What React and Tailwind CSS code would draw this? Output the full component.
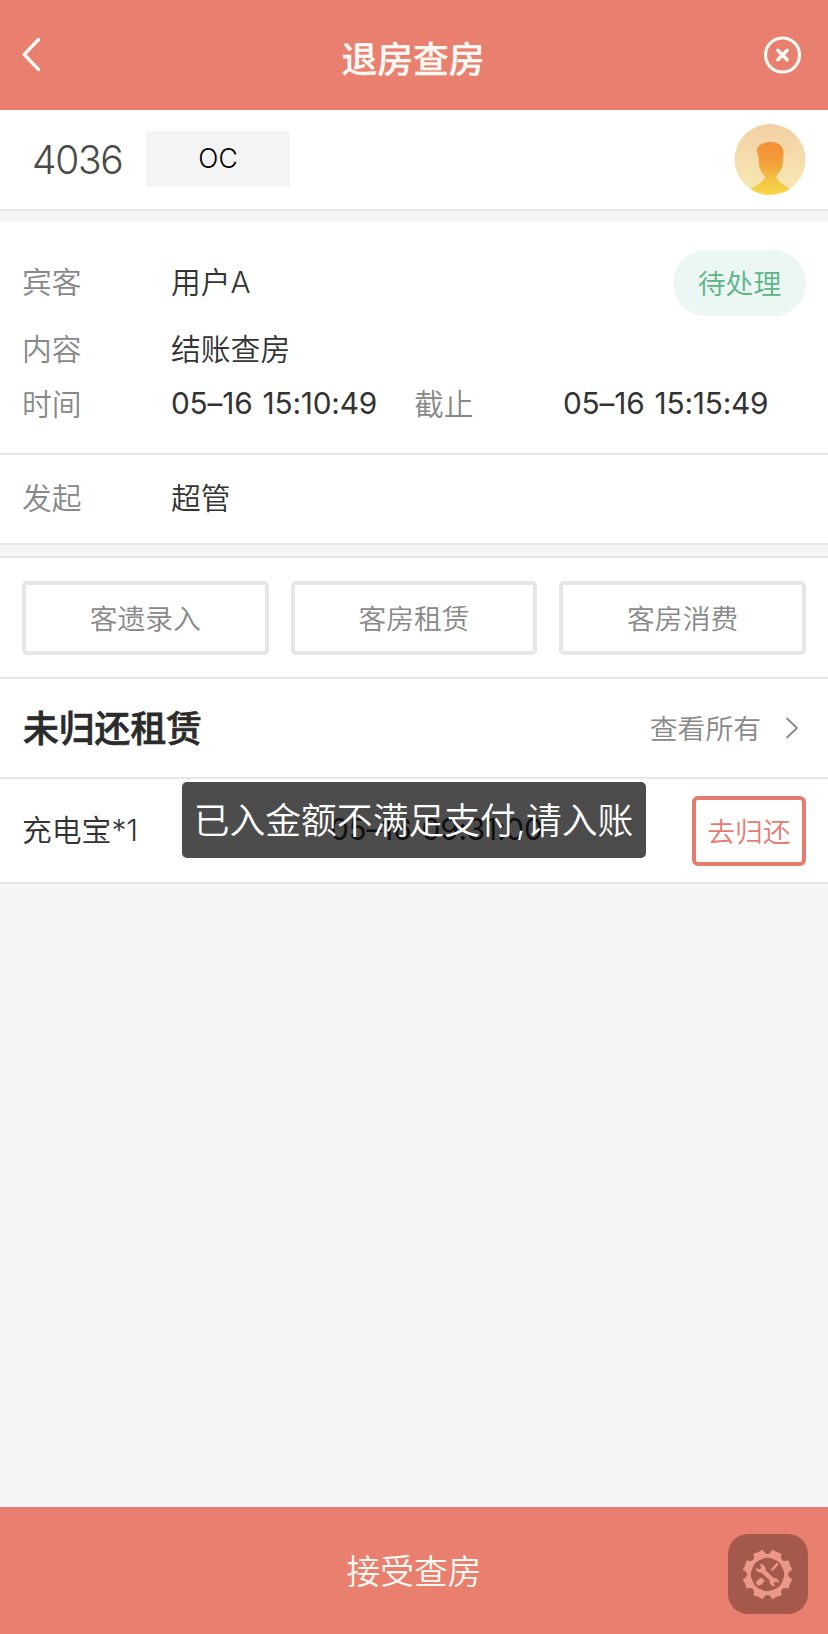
import React from 'react';

const actions = ['客遗录入', '客房租赁', '客房消费'];

// gear outline: 8 teeth around the ring
const gearTeeth = [0, 45, 90, 135, 180, 225, 270, 315];

function BackIcon() {
    return (
        <svg className="w-5 h-9" viewBox="0 0 20 36" fill="none" stroke="#fff9f3" strokeWidth="3.4" strokeLinecap="round" strokeLinejoin="round">
            <path d="M16.5 2.5 L2.2 17.5 L16.5 32.5" />
        </svg>
    );
}

function CloseIcon() {
    return (
        <svg className="w-[38px] h-[38px]" viewBox="0 0 38 38" fill="none" stroke="#fff9f3" strokeLinecap="round">
            <circle cx="18.5" cy="19" r="17" strokeWidth="3.2" />
            <path d="M13.8 14.3 L23.2 23.7 M23.2 14.3 L13.8 23.7" strokeWidth="3.6" />
        </svg>
    );
}

function Avatar() {
    return (
        <svg className="w-[72px] h-[72px]" viewBox="0 0 72 72">
            <defs>
                <linearGradient id="avatarBg" x1="0" y1="0" x2="0" y2="1">
                    <stop offset="0" stopColor="#f3cfa4" />
                    <stop offset="1" stopColor="#f7ebb4" />
                </linearGradient>
                <linearGradient id="avatarMan" x1="0" y1="0" x2="0" y2="1">
                    <stop offset="0" stopColor="#f28f35" />
                    <stop offset="0.35" stopColor="#f39d3b" />
                    <stop offset="0.7" stopColor="#f5c345" />
                    <stop offset="1" stopColor="#f8dc45" />
                </linearGradient>
                <clipPath id="avatarClip">
                    <circle cx="36" cy="35.5" r="35.5" />
                </clipPath>
            </defs>
            <g clipPath="url(#avatarClip)">
                <rect width="72" height="72" fill="url(#avatarBg)" />
                <path
                    fill="url(#avatarMan)"
                    d="M23 25 C25 20 30 18 37 18 C45 18 49.5 22 49.5 29 L48.6 41 C48 46 44.5 49 42.5 52 L42.5 54 C44 57.5 50 61 56 64.5 L56 73 L15 73 L15 65.5 C23 61.5 28.5 58 31.5 53 C28 49 25.5 46 25 41 L24.3 31 C23 29.5 22.6 27.5 23 25 Z"
                />
            </g>
        </svg>
    );
}

function ToolsIcon() {
    return (
        <svg className="w-[51px] h-[51px]" viewBox="0 0 50 50">
            <g fill="#ec9787">
                {gearTeeth.map((deg) => (
                    <path key={deg} transform={`rotate(${deg + 22.5} 25 25)`} d="M17 7 C19 5.500 20 3.500 20 0.800 Q25 1.600 30 0.800 C30 3.500 31 5.500 33 7 L33 9 L17 9 Z" />
                ))}
            </g>
            <circle cx="25" cy="25" r="18.3" fill="none" stroke="#ec9787" strokeWidth="3.8" />
            <g fill="#ec9787">
                {/* wrench */}
                <path d="M13.5 18.5 L17 20 L19 18.3 L17.5 14.8 C21 14.5 23.5 17 23 20.5 L31 28.5 C34 28 36.5 30 36.5 33.5 L33.5 31.5 L31 33.5 L32.5 36.5 C29 36.5 26.5 34 27.3 31 L19 23.3 C16 23.5 13.5 21.5 13.5 18.5 Z" />
                {/* screwdriver */}
                <path d="M28 20.5 L34 13.5 L36 15 L30 21.5 Z" />
                <path d="M14 32 L18.5 28 L22.5 31 L19 35 C17 36.5 12.8 35.5 14 32 Z" />
            </g>
        </svg>
    );
}

function Label({ children }) {
    return <span className="w-[149px] shrink-0 text-[#888]">{children}</span>;
}

function Time({ children }) {
    return <span className="whitespace-nowrap font-normal tracking-[-0.2px] [word-spacing:2px] pb-0.5">{children}</span>;
}

export default function App() {
    return (
        <div className="relative w-full h-[1634px] flex flex-col bg-[#f5f5f5] text-[#333] text-[29.8px] font-[350] leading-none font-['Inter','Noto_Sans_CJK_SC',sans-serif]">
            <header className="h-[110px] shrink-0 bg-[#e97f6f] flex items-center justify-between pl-[22px] pr-[26px]">
                <div className="w-10"><BackIcon /></div>
                <h1 className="text-[35.8px] font-medium text-[#fff9f3] pt-[11px] [-webkit-text-stroke:0.3px_#fff9f3]">退房查房</h1>
                <CloseIcon />
            </header>

            <section className="h-[101px] shrink-0 bg-white border-b-2 border-[#e6e6e6] flex items-center pl-[32px] pr-[22px]">
                <span className="w-[114px] text-[39px] tracking-[-1.3px] text-[#4a4a4a]">4036</span>
                <span className="w-36 h-[56px] -mt-0.5 bg-[#f4f4f4] text-[26.5px] text-black flex items-center justify-center pb-px">OC</span>
                <div className="ml-auto"><Avatar /></div>
            </section>

            <section className="mt-[11px] h-[233px] shrink-0 bg-white border-b-2 border-[#e6e6e6] pt-7 px-[22px]">
                <div className="h-[66px] mb-1.5 flex items-center">
                    <Label>宾客</Label>
                    <span>用户A</span>
                    <span className="ml-auto w-[133px] h-[66px] rounded-full bg-[#ecf7f3] text-[#5bb586] text-[27.8px] flex items-center justify-center pt-[3px]">待处理</span>
                </div>
                <div className="h-[55px] flex items-center">
                    <Label>内容</Label>
                    <span>结账查房</span>
                </div>
                <div className="h-[55px] flex items-center">
                    <Label>时间</Label>
                    <div className="w-[243px] flex"><Time>05–16 15:10:49</Time></div>
                    <Label>截止</Label>
                    <Time>05–16 15:15:49</Time>
                </div>
            </section>

            <section className="h-[90px] shrink-0 bg-white border-b-2 border-[#e6e6e6] px-[22px] flex items-center">
                <Label>发起</Label>
                <span>超管</span>
            </section>

            <section className="mt-[11px] h-[123px] shrink-0 bg-white border-y-2 border-[#e6e6e6] px-[22px] pt-[23px] grid grid-cols-3 gap-[22px]">
                {actions.map((name) => (
                    <button key={name} className="h-[74px] border-4 border-[#e6e6e6] rounded-[5px] text-[27.8px] text-[#888] pt-[3px]">
                        {name}
                    </button>
                ))}
            </section>

            <section className="h-[100px] shrink-0 bg-white border-b-2 border-[#e6e6e6] pl-[23px] pr-[29px] flex items-center justify-between">
                <h2 className="text-[35.8px] font-medium text-[#2b2b2b] pt-1 [-webkit-text-stroke:0.7px_#2b2b2b]">未归还租赁</h2>
                <div className="flex items-center gap-[24px] text-[27.8px] text-[#888]">
                    <span className="pt-[3px]">查看所有</span>
                    <svg className="w-[14px] h-[22px]" viewBox="0 0 14 22" fill="none" stroke="#888" strokeWidth="1.8">
                        <path d="M1.5 1 L12 11 L1.5 21" />
                    </svg>
                </div>
            </section>

            <section className="h-[105px] shrink-0 bg-white border-b-2 border-[#e6e6e6] pl-[22px] pr-[22px] flex items-center">
                <span className="w-[308px] pt-px">充电宝*1</span>
                <Time>05–16 09:31:00</Time>
                <button className="ml-auto w-[114px] h-[70px] border-4 border-[#e67c70] rounded-md text-[27.8px] text-[#e67c70] whitespace-nowrap pt-1">去归还</button>
            </section>

            {/* Toast */}
            <div className="absolute top-[782px] left-1/2 -translate-x-1/2 w-[464px] h-[76px] rounded-[5px] bg-black/70 text-white text-[35.8px] flex items-center justify-center whitespace-nowrap pt-1 pr-px">
                已入金额不满足支付,请入账
            </div>

            <footer className="mt-auto h-[127px] shrink-0 bg-[#e97f6f] flex items-center justify-center">
                <button className="text-[33.8px] text-[#fff9f3] pt-[3px]">接受查房</button>
            </footer>

            {/* Floating tools button */}
            <div className="absolute right-5 bottom-5 w-20 h-20 rounded-[20px] bg-[#a5594b] flex items-center justify-center pr-0.5">
                <ToolsIcon />
            </div>
        </div>
    );
}
